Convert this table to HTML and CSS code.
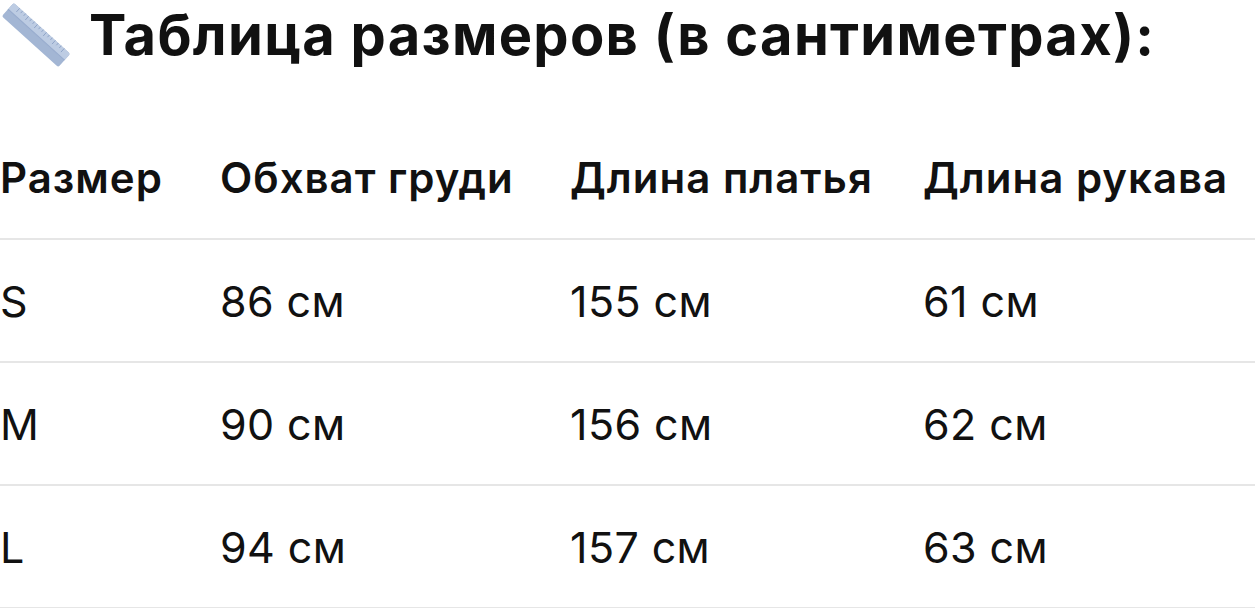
FILE: index.html
```html
<!DOCTYPE html>
<html lang="ru">
<head>
<meta charset="utf-8">
<title>Таблица размеров</title>
<link rel="stylesheet" href="styles.css">
</head>
<body>
<h2 class="title">
  <svg class="ruler" width="72" height="68" viewBox="0 0 72 68" aria-hidden="true">
    <g transform="translate(36 34) rotate(42)">
      <rect x="-38" y="-9" width="76" height="18" rx="2" fill="#a3b6d4"/>
      <rect x="-38" y="-9" width="76" height="9" rx="2" fill="#bdcce3"/>
      <rect x="-38" y="-1" width="76" height="1.2" fill="#98acce"/>
      <g stroke="#8ea3c6" stroke-width="0.9">
        <line x1="-30" y1="-9" x2="-30" y2="-4"/>
        <line x1="-26" y1="-9" x2="-26" y2="-6"/>
        <line x1="-22" y1="-9" x2="-22" y2="-6"/>
        <line x1="-18" y1="-9" x2="-18" y2="-4"/>
        <line x1="-14" y1="-9" x2="-14" y2="-6"/>
        <line x1="-10" y1="-9" x2="-10" y2="-6"/>
        <line x1="-6" y1="-9" x2="-6" y2="-4"/>
        <line x1="-2" y1="-9" x2="-2" y2="-6"/>
        <line x1="2" y1="-9" x2="2" y2="-6"/>
        <line x1="6" y1="-9" x2="6" y2="-4"/>
        <line x1="10" y1="-9" x2="10" y2="-6"/>
        <line x1="14" y1="-9" x2="14" y2="-6"/>
        <line x1="18" y1="-9" x2="18" y2="-4"/>
        <line x1="22" y1="-9" x2="22" y2="-6"/>
        <line x1="26" y1="-9" x2="26" y2="-6"/>
        <line x1="30" y1="-9" x2="30" y2="-4"/>
      </g>
    </g>
  </svg>
  <span>Таблица размеров (в сантиметрах):</span>
</h2>
<table class="sizes">
  <colgroup>
    <col class="c1"><col class="c2"><col class="c3"><col class="c4">
  </colgroup>
  <thead>
    <tr><th>Размер</th><th>Обхват груди</th><th>Длина платья</th><th>Длина рукава</th></tr>
  </thead>
  <tbody>
    <tr><td>S</td><td>86 см</td><td>155 см</td><td>61 см</td></tr>
    <tr><td>M</td><td>90 см</td><td>156 см</td><td>62 см</td></tr>
    <tr><td>L</td><td>94 см</td><td>157 см</td><td>63 см</td></tr>
  </tbody>
</table>
</body>
</html>
```
FILE: styles.css
```css
html, body {
  margin: 0;
  padding: 0;
  background: #ffffff;
}
body {
  font-family: Inter, "Noto Sans", "Liberation Sans", sans-serif;
  color: #111111;
  width: 1255px;
  overflow: hidden;
}
.title {
  display: flex;
  align-items: center;
  gap: 17px;
  margin: 0;
  height: 70px;
  font-size: 56px;
  font-weight: 700;
  letter-spacing: 1.3px;
  white-space: nowrap;
}
.ruler {
  flex: 0 0 auto;
}
.sizes {
  margin-top: 46px;
  width: 1255px;
  border-collapse: collapse;
  table-layout: fixed;
}
.c1 { width: 220px; }
.c2 { width: 350px; }
.c3 { width: 353px; }
.c4 { width: 332px; }
.sizes th,
.sizes td {
  padding: 0;
  text-align: left;
  vertical-align: middle;
  border-bottom: 2px solid #e6e6e6;
  white-space: nowrap;
}
.sizes th {
  height: 122px;
  font-size: 42px;
  font-weight: 600;
  letter-spacing: 1px;
}
.sizes td {
  height: 121px;
  font-size: 43px;
  font-weight: 400;
  letter-spacing: 0.4px;
}
```
